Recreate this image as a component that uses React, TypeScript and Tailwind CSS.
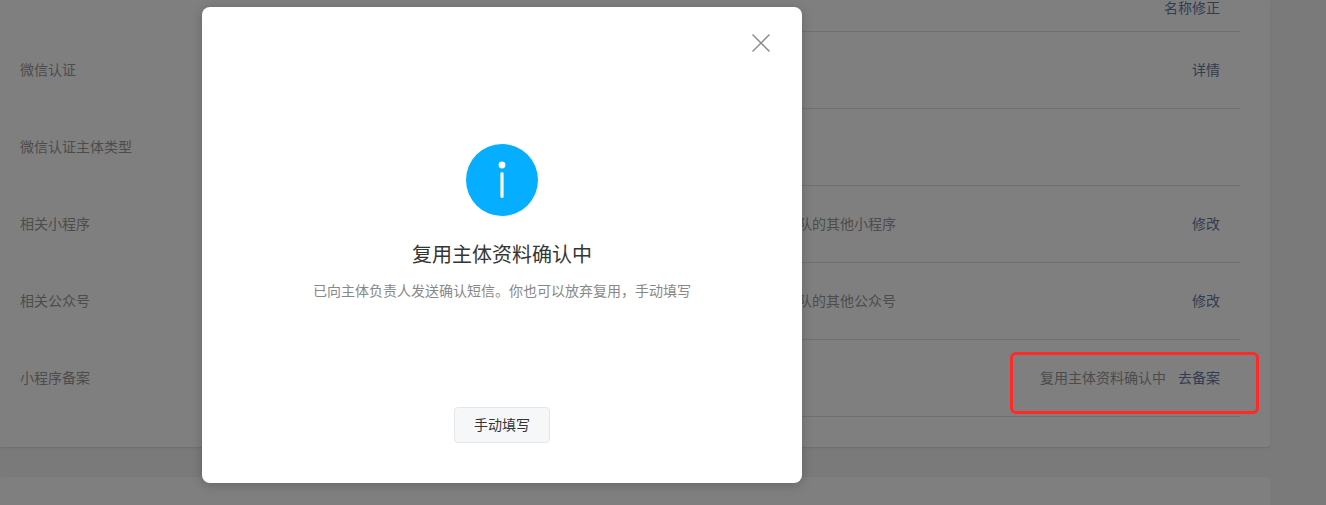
const rows = [
  { label: '微信认证', action: '详情' },
  { label: '微信认证主体类型' },
  { label: '相关小程序', value: '同一团队的其他小程序', action: '修改' },
  { label: '相关公众号', value: '同一团队的其他公众号', action: '修改' },
]

const font = "font-['Noto_Sans_CJK_SC','Noto_Sans',sans-serif]"

function Row({ label, value, action }: { label: string; value?: string; action?: string }) {
  return (
    <div className="flex h-[77px] text-sm">
      <span className="flex w-[220px] items-center pb-1 pl-5 text-[#999]">{label}</span>
      <div className="grid flex-1 grid-cols-[536px_1fr_auto] items-center border-b border-[#e0e0e0] pr-5 pb-0.5">
        <span />
        <span className="text-[#999]">{value}</span>
        {action && <a className="text-[#6479a5]">{action}</a>}
      </div>
    </div>
  )
}

function InfoIcon() {
  return (
    <svg className="h-[72px] w-[72px]" viewBox="0 0 72 72">
      <circle cx="36" cy="36" r="36" fill="#06aeff" />
      <circle cx="36" cy="21" r="3.4" fill="#fff" />
      <path d="M36 29.5V52.5" stroke="#fff" strokeWidth="3.2" strokeLinecap="round" />
    </svg>
  )
}

export default function App() {
  return (
    <div className={`relative h-[505px] w-[1326px] overflow-hidden bg-[#f4f4f4] ${font}`}>
      <div className="w-[1270px] rounded-br bg-white pr-[30px] pb-[30px] shadow-[0_1px_2px_rgba(0,0,0,0.1)]">
        <div className="ml-[220px] flex h-8 items-start justify-end border-b border-[#e0e0e0] pr-5 text-sm leading-[14px]">
          <a className="text-[#6479a5]">名称修正</a>
        </div>
        {rows.map((row) => (
          <Row key={row.label} {...row} />
        ))}
        <div className="flex h-[77px] text-sm">
          <span className="flex w-[220px] items-center pb-1 pl-5 text-[#999]">小程序备案</span>
          <div className="flex flex-1 items-center justify-end gap-3 border-b border-[#e0e0e0] pr-5 pb-0.5">
            <span className="text-[#999]">复用主体资料确认中</span>
            <a className="text-[#6479a5]">去备案</a>
          </div>
        </div>
      </div>
      <div className="mt-[30px] h-[60px] w-[1270px] rounded-t bg-white" />

      {/* mask */}
      <div className="absolute inset-0 bg-black/50" />

      {/* annotation */}
      <div className="absolute top-[352px] left-[1010px] h-[62px] w-[249px] rounded-md border-[3.5px] border-[#ff2a26]" />

      <div className="absolute top-[7px] left-[202px] flex h-[476px] w-[600px] flex-col items-center rounded-lg bg-white pt-[137px] shadow-[0_2px_12px_rgba(0,0,0,0.2)]">
        <button className="absolute top-[27px] right-[32px] text-[#888]">
          <svg className="h-[18px] w-[18px]" viewBox="0 0 18 18" fill="none" stroke="currentColor" strokeWidth="1.4">
            <path d="M0.5 0.5L17.5 17.5M17.5 0.5L0.5 17.5" />
          </svg>
        </button>
        <InfoIcon />
        <h2 className="mt-6 text-xl leading-7 text-[#353535]">复用主体资料确认中</h2>
        <p className="mt-3 text-sm leading-5 text-[#888]">已向主体负责人发送确认短信。你也可以放弃复用，手动填写</p>
        <button className="mt-auto mb-10 h-9 w-24 rounded border border-[#e4e6ea] bg-[#f6f7f9] pb-0.5 text-sm text-[#353535]">
          手动填写
        </button>
      </div>
    </div>
  )
}
